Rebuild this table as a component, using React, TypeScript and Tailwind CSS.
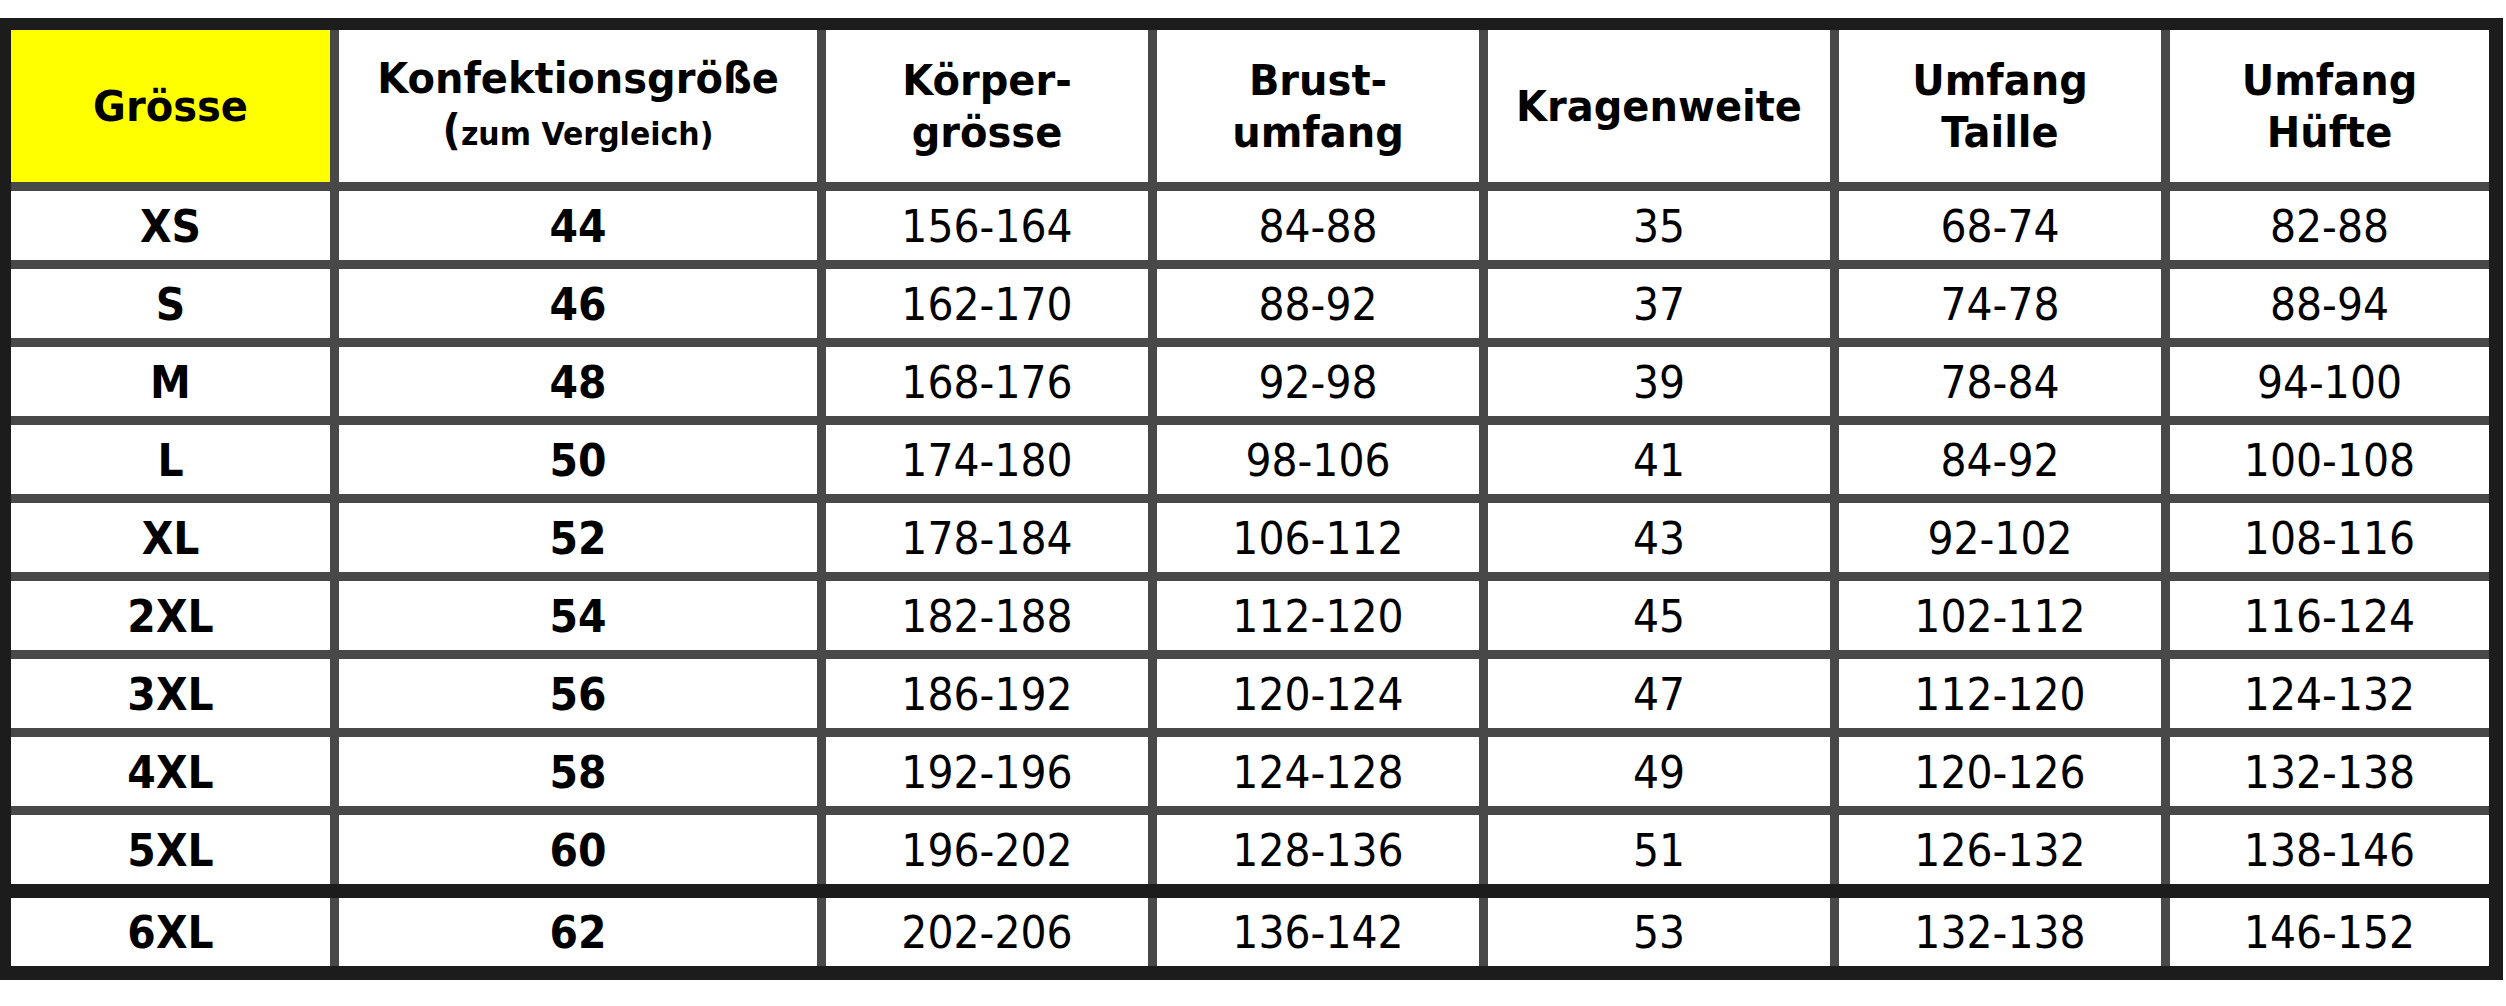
import React from "react";

const rows: string[][] = [
  ["XS", "44", "156-164", "84-88", "35", "68-74", "82-88"],
  ["S", "46", "162-170", "88-92", "37", "74-78", "88-94"],
  ["M", "48", "168-176", "92-98", "39", "78-84", "94-100"],
  ["L", "50", "174-180", "98-106", "41", "84-92", "100-108"],
  ["XL", "52", "178-184", "106-112", "43", "92-102", "108-116"],
  ["2XL", "54", "182-188", "112-120", "45", "102-112", "116-124"],
  ["3XL", "56", "186-192", "120-124", "47", "112-120", "124-132"],
  ["4XL", "58", "192-196", "124-128", "49", "120-126", "132-138"],
  ["5XL", "60", "196-202", "128-136", "51", "126-132", "138-146"],
];
const last = ["6XL", "62", "202-206", "136-142", "53", "132-138", "146-152"];

const gridCols =
  "grid grid-cols-[319px_478px_322px_322px_342px_322px_319px] gap-[9px]";

function Row({ cells, h }: { cells: string[]; h: string }) {
  return (
    <>
      {cells.map((c, i) => (
        <div
          key={i}
          className={`bg-white flex items-center justify-center ${h} text-[41px] leading-none text-black ${
            i < 2 ? "font-bold" : "font-normal"
          }`}
        >
          <span className="inline-block scale-y-107 pt-[3px]">{c}</span>
        </div>
      ))}
    </>
  );
}

function Head({ children, yellow }: { children: React.ReactNode; yellow?: boolean }) {
  return (
    <div
      className={`${
        yellow ? "bg-[#ffff00]" : "bg-white"
      } h-[152px] flex flex-col items-center justify-center text-center font-bold text-[40px] leading-[52px] text-black`}
    >
      {children}
    </div>
  );
}

export default function App() {
  return (
    <div
      className="w-[2506px] h-[1006px] bg-white pt-[18px]"
      style={{ fontFamily: '"DejaVu Sans", Verdana, sans-serif' }}
    >
      <div className="w-[2503px] bg-[#1c1c1c] border-l-[11px] border-t-[12px] border-r-[14px] border-b-[14px] border-[#1c1c1c]">
        <div className={`${gridCols} bg-[#484848]`}>
          <Head yellow>
            <span className="inline-block scale-y-107">Grösse</span>
          </Head>
          <Head>
            <span className="inline-block scale-y-107">Konfektionsgröße</span>
            <span className="inline-block scale-y-107">
              (<span className="text-[30px]">zum Vergleich)</span>
            </span>
          </Head>
          <Head>
            <span className="inline-block scale-y-107">Körper-</span>
            <span className="inline-block scale-y-107">grösse</span>
          </Head>
          <Head>
            <span className="inline-block scale-y-107">Brust-</span>
            <span className="inline-block scale-y-107">umfang</span>
          </Head>
          <Head>
            <span className="inline-block scale-y-107">Kragenweite</span>
          </Head>
          <Head>
            <span className="inline-block scale-y-107">Umfang</span>
            <span className="inline-block scale-y-107">Taille</span>
          </Head>
          <Head>
            <span className="inline-block scale-y-107">Umfang</span>
            <span className="inline-block scale-y-107">Hüfte</span>
          </Head>
          {rows.map((r, i) => (
            <Row key={i} cells={r} h="h-[69px]" />
          ))}
        </div>
        <div className="h-[14px] bg-[#1c1c1c]" />
        <div className={`${gridCols} bg-[#484848]`}>
          <Row cells={last} h="h-[68px]" />
        </div>
      </div>
    </div>
  );
}
